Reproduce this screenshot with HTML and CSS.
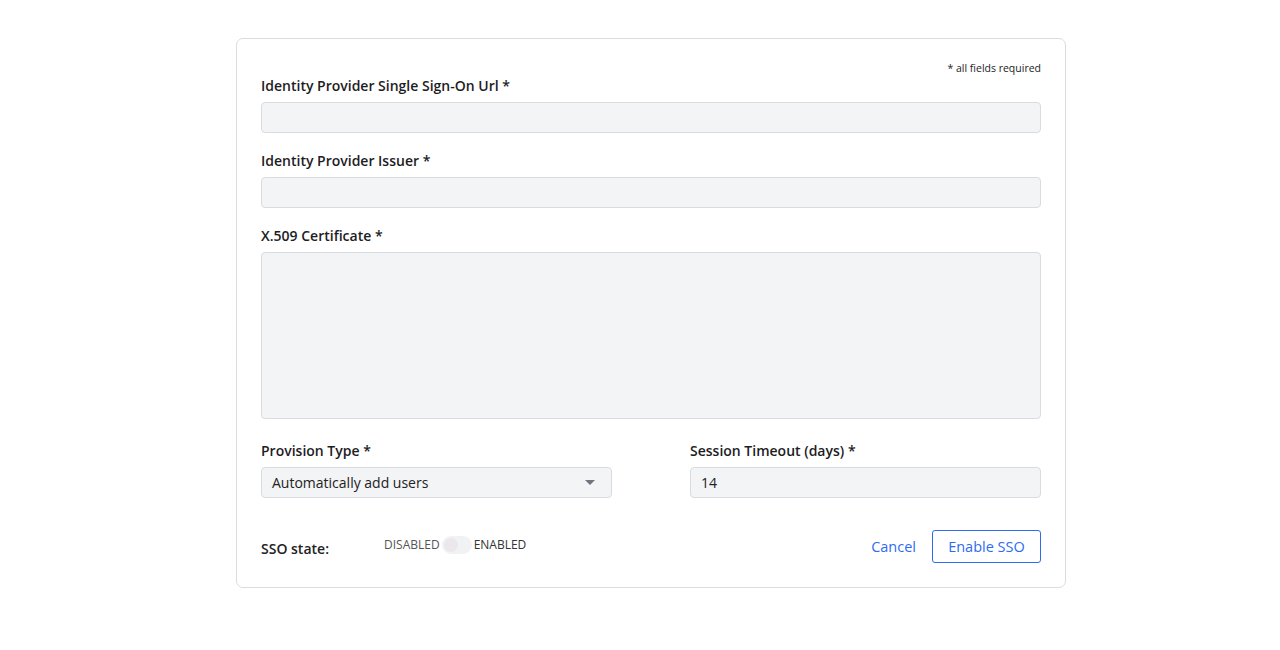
FILE: index.html
```html
<!DOCTYPE html>
<html>
<head>
<meta charset="utf-8">
<link rel="stylesheet" href="styles.css">
</head>
<body>
<div class="page">
  <form class="card">
    <div class="required-note">* all fields required</div>
    <div class="field">
      <label class="label">Identity Provider Single Sign-On Url *</label>
      <input class="input" type="text">
    </div>
    <div class="field">
      <label class="label">Identity Provider Issuer *</label>
      <input class="input" type="text">
    </div>
    <div class="field">
      <label class="label">X.509 Certificate *</label>
      <textarea class="input textarea"></textarea>
    </div>
    <div class="row">
      <div class="col">
        <label class="label">Provision Type *</label>
        <div class="input select">
          <span>Automatically add users</span>
          <span class="caret"></span>
        </div>
      </div>
      <div class="col">
        <label class="label">Session Timeout (days) *</label>
        <div class="input value">14</div>
      </div>
    </div>
    <div class="footer">
      <div class="state">
        <span class="state-label">SSO state:</span>
        <span class="toggle-group">
          <span class="toggle-off">DISABLED</span>
          <span class="toggle"><span class="knob"></span></span>
          <span class="toggle-on">ENABLED</span>
        </span>
      </div>
      <div class="actions">
        <span class="cancel">Cancel</span>
        <span class="btn">Enable SSO</span>
      </div>
    </div>
  </form>
</div>
</body>
</html>
```
FILE: styles.css
```css
* { box-sizing: border-box; }
html, body { margin: 0; padding: 0; background: #fff; }
body {
  font-family: "Open Sans", "Liberation Sans", sans-serif;
  color: #222;
}
.page {
  padding-top: 38px;
  display: flex;
  justify-content: center;
  padding-left: 22px;
}
.card {
  position: relative;
  width: 830px;
  height: 550px;
  border: 1px solid #dcdcde;
  border-radius: 7px;
  padding: 22px 24px 0 24px;
  display: flex;
  flex-direction: column;
  background: #fff;
}
.card::after {
  content: "";
  position: absolute;
  left: 4px;
  top: 100%;
  width: 530px;
  height: 9px;
  background: linear-gradient(to right, rgba(0,0,0,0.04), rgba(0,0,0,0.025) 70%, rgba(0,0,0,0));
  filter: blur(2px);
  z-index: -1;
}
.required-note {
  text-align: right;
  font-size: 10.5px;
  line-height: 14px;
  color: #222;
}
.field { display: flex; flex-direction: column; }
.label {
  display: block;
  font-weight: 600;
  font-size: 14px;
  line-height: 18px;
  color: #1d1d1f;
  margin-top: 2px;
  margin-bottom: 7px;
}
.field + .field { margin-top: 17px; }
.input {
  display: block;
  width: 100%;
  height: 31px;
  background: #f3f4f6;
  border: 1px solid #d9dbe0;
  border-radius: 4px;
  font-family: inherit;
  font-size: 14px;
  color: #222;
  padding: 0 10px;
  outline: none;
  margin: 0;
}
.textarea { height: 167px; resize: none; }
.row {
  display: flex;
  gap: 78px;
  margin-top: 21px;
}
.col { flex: 1; display: flex; flex-direction: column; }
.select, .value {
  display: flex;
  align-items: center;
  justify-content: space-between;
}
.select { padding-right: 16px; }
.caret {
  width: 0; height: 0;
  border-left: 5px solid transparent;
  border-right: 5px solid transparent;
  border-top: 5px solid #77707f;
}
.footer {
  margin-top: 32px;
  display: flex;
  justify-content: space-between;
  align-items: center;
}
.state { display: flex; align-items: center; }
.state-label {
  font-weight: 600;
  font-size: 14px;
  width: 123px;
  margin-top: 3px;
}
.toggle-group {
  display: flex;
  align-items: center;
  font-size: 12px;
  margin-top: -4px;
}
.toggle-off { color: #555; }
.toggle-on { color: #333; }
.toggle {
  width: 30px;
  height: 18px;
  border-radius: 9px;
  background: #f1f2f4;
  margin: 0 2px;
  display: flex;
  align-items: center;
  padding-left: 2px;
}
.knob {
  width: 14px; height: 14px;
  border-radius: 50%;
  background: #ebe7ec;
}
.actions { display: flex; align-items: center; gap: 16px; }
.cancel { color: #2d6cf0; font-size: 14.5px; }
.btn {
  color: #2d6cf0;
  font-size: 14.5px;
  border: 1px solid #2d6cf0;
  border-radius: 3px;
  height: 33px;
  width: 109px;
  display: flex;
  align-items: center;
  justify-content: center;
}
```
